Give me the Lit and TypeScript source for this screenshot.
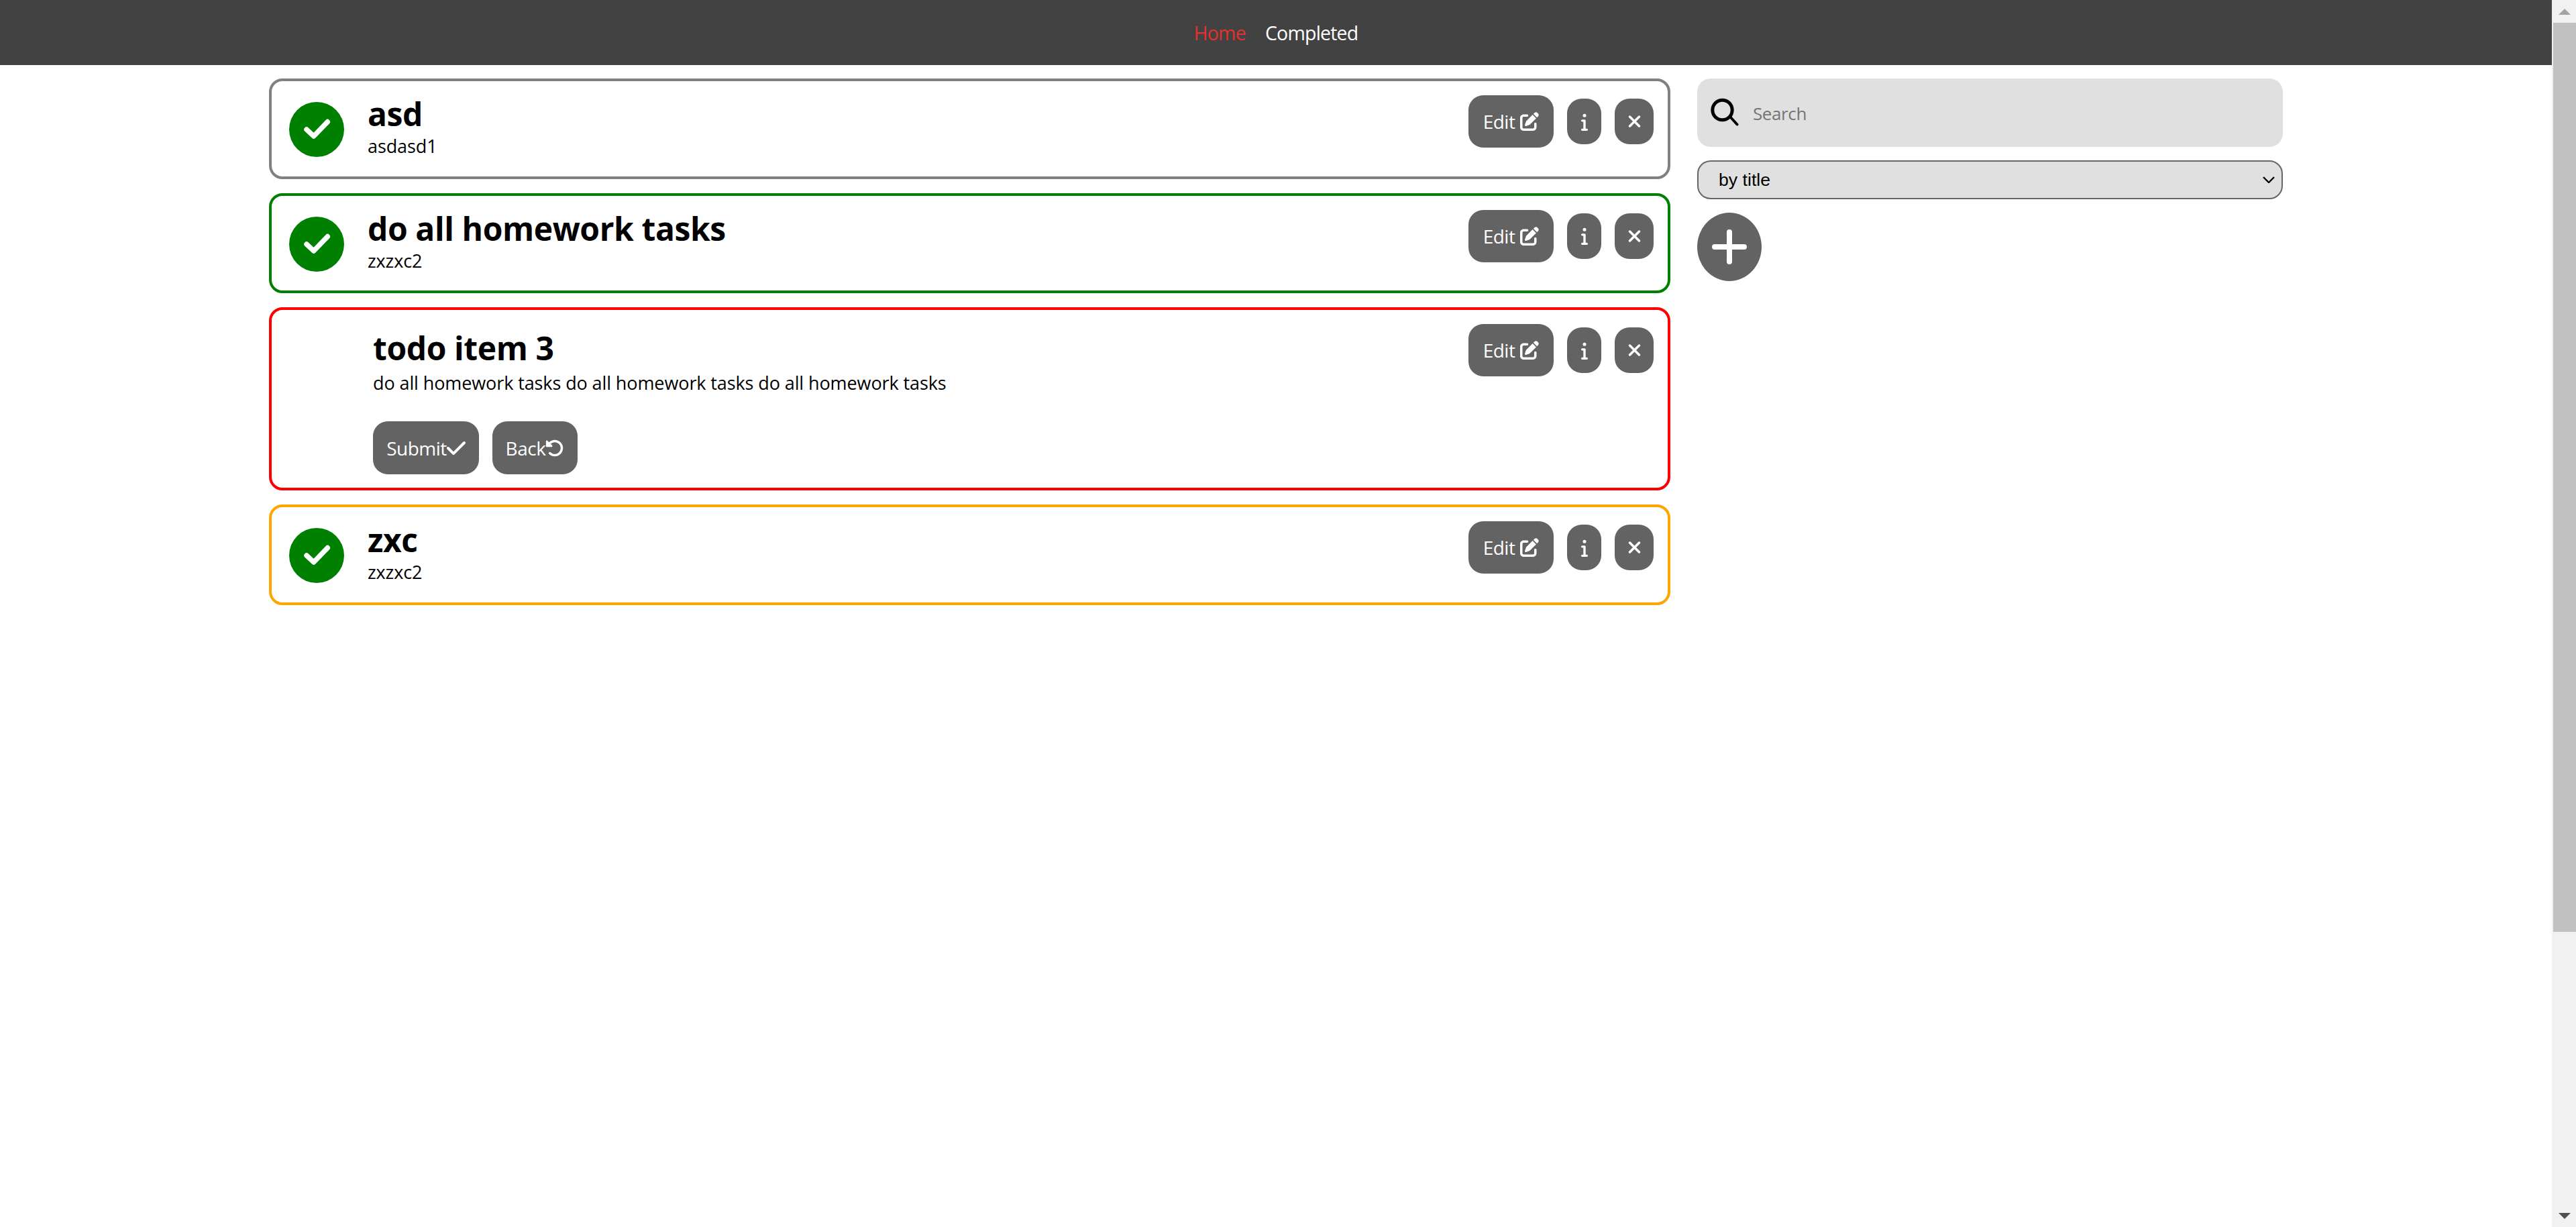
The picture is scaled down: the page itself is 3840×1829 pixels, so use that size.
import { LitElement, html, css, svg } from "lit";
import { customElement, state } from "lit/decorators.js";

const ICONS = {
  check: { box: "0 0 448 512", d: "M438.6 105.4c12.5 12.5 12.5 32.8 0 45.3l-256 256c-12.5 12.5-32.8 12.5-45.3 0l-128-128c-12.5-12.5-12.5-32.8 0-45.3s32.8-12.5 45.3 0L160 338.7 393.4 105.4c12.5-12.5 32.8-12.5 45.3 0z" },
  edit: { box: "0 0 512 512", d: "M471.6 21.7c-21.9-21.9-57.3-21.9-79.2 0L362.3 51.7l97.9 97.9 30.1-30.1c21.9-21.9 21.9-57.3 0-79.2L471.6 21.7zm-299.2 220c-6.1 6.1-10.8 13.6-13.5 21.9l-29.6 88.8c-2.9 8.6-.6 18.1 5.8 24.6s15.9 8.7 24.6 5.8l88.8-29.6c8.2-2.7 15.7-7.4 21.9-13.5L437.7 172.3 339.7 74.3 172.4 241.7zM96 64C43 64 0 107 0 160V416c0 53 43 96 96 96H352c53 0 96-43 96-96V320c0-17.7-14.3-32-32-32s-32 14.3-32 32v96c0 17.7-14.3 32-32 32H96c-17.7 0-32-14.3-32-32V160c0-17.7 14.3-32 32-32h96c17.7 0 32-14.3 32-32s-14.3-32-32-32H96z" },
  info: { box: "0 0 192 512", d: "M48 80a48 48 0 1 1 96 0A48 48 0 1 1 48 80zM0 224c0-17.7 14.3-32 32-32H96c17.7 0 32 14.3 32 32V448h32c17.7 0 32 14.3 32 32s-14.3 32-32 32H32c-17.7 0-32-14.3-32-32s14.3-32 32-32H64V256H32c-17.7 0-32-14.3-32-32z" },
  close: { box: "0 0 384 512", d: "M342.6 150.6c12.5-12.5 12.5-32.8 0-45.3s-32.8-12.5-45.3 0L192 210.7 86.6 105.4c-12.5-12.5-32.8-12.5-45.3 0s-12.5 32.8 0 45.3L146.7 256 41.4 361.4c-12.5 12.5-12.5 32.8 0 45.3s32.8 12.5 45.3 0L192 301.3 297.4 406.6c12.5 12.5 32.8 12.5 45.3 0s12.5-32.8 0-45.3L237.3 256 342.6 150.6z" },
  back: { box: "0 0 512 512", d: "M48.5 224H40c-13.3 0-24-10.7-24-24V72c0-9.7 5.8-18.5 14.8-22.2s19.3-1.7 26.2 5.2L98.6 96.6c87.6-86.5 228.7-86.2 315.8 1c87.5 87.5 87.5 229.3 0 316.8s-229.3 87.5-316.8 0c-12.5-12.5-12.5-32.8 0-45.3s32.8-12.5 45.3 0c62.5 62.5 163.8 62.5 226.3 0s62.5-163.8 0-226.3c-62.2-62.2-162.7-62.5-225.3-1L185 183c6.9 6.9 8.9 17.2 5.2 26.2s-12.5 14.8-22.2 14.8H48.5z" },
};

const icon = (name: keyof typeof ICONS, cls: string) =>
  html`<svg class=${cls} viewBox=${ICONS[name].box} fill="currentColor">${svg`<path d=${ICONS[name].d}></path>`}</svg>`;

type Todo = { title: string; text: string; color: string; open?: boolean };

@customElement("app-root")
export class AppRoot extends LitElement {
  static styles = css`
    :host {
      display: flex;
      height: 100vh;
      overflow: hidden;
      font-family: "Open Sans", "Noto Sans", sans-serif;
      background: #fff;
      color: #000;
    }
    .page {
      flex: 1;
      min-width: 0;
    }
    .nav {
      height: 97px;
      background: #424242;
      display: flex;
      justify-content: center;
      align-items: center;
      gap: 29px;
      font-size: 28.5px;
      letter-spacing: -0.8px;
    }
    .nav a {
      color: #fff;
    }
    .nav a.active {
      color: #e53030;
    }
    .content {
      width: 3002px;
      margin: 20px auto 0;
      display: flex;
      gap: 40px;
      align-items: flex-start;
    }
    .list {
      width: 2089px;
      display: flex;
      flex-direction: column;
      gap: 21px;
    }
    .card {
      box-sizing: border-box;
      min-height: 149.6px;
      border: 4px solid;
      border-radius: 20px;
      display: flex;
      align-items: flex-start;
      padding: 21px 21px 20px 26px;
    }
    .card.open {
      padding-left: 151px;
    }
    .done {
      flex: none;
      width: 82px;
      height: 82px;
      margin: 10px 35px 0 0;
      border-radius: 50%;
      background: #008000;
    }
    .done svg {
      display: block;
      width: 82px;
      height: 82px;
    }
    .body {
      flex: 1;
      min-width: 0;
      margin-top: -3px;
    }
    .title {
      margin: 0;
      font-size: 48px;
      line-height: 61px;
      font-weight: 700;
      letter-spacing: -0.4px;
    }
    .open .title {
      margin-top: 8px;
    }
    .text {
      margin: 0;
      font-size: 27px;
      line-height: 36px;
      letter-spacing: -0.1px;
    }
    .open .text {
      margin-top: 4px;
    }
    .actions {
      display: flex;
      align-items: center;
      gap: 20px;
    }
    .btn {
      box-sizing: border-box;
      border: none;
      padding: 0;
      background: #636363;
      color: #fff;
      font: inherit;
      font-size: 28px;
      letter-spacing: -0.5px;
      display: inline-flex;
      align-items: center;
      justify-content: center;
      border-radius: 22px;
    }
    .btn.edit {
      width: 127px;
      height: 78px;
      gap: 8px;
    }
    .btn.info {
      width: 51px;
      height: 68px;
    }
    .btn.close {
      width: 58px;
      height: 68px;
    }
    .btn.submit {
      width: 158px;
      height: 79px;
    }
    .btn.back {
      width: 127px;
      height: 79px;
    }
    .ic-edit {
      width: 28px;
      height: 28px;
    }
    .ic-info {
      width: 14px;
      height: 27px;
    }
    .ic-close {
      width: 21px;
      height: 28px;
    }
    .ic-check {
      width: 28px;
      height: 32px;
    }
    .ic-back {
      width: 28px;
      height: 28px;
    }
    .forms {
      display: flex;
      gap: 20px;
      margin-top: 39px;
    }
    .side {
      flex: 1;
      min-width: 0;
      display: flex;
      flex-direction: column;
      align-items: flex-start;
      gap: 20px;
    }
    .search {
      box-sizing: border-box;
      width: 100%;
      height: 102px;
      background: #e0e0e0;
      border-radius: 20px;
      display: flex;
      align-items: center;
      gap: 21px;
      padding-left: 18px;
    }
    .search svg {
      flex: none;
      width: 44px;
      height: 44px;
    }
    .search input {
      flex: 1;
      min-width: 0;
      border: none;
      outline: none;
      background: none;
      font: inherit;
      font-size: 26px;
      letter-spacing: -0.4px;
      padding: 2px 0 0;
    }
    .search input::placeholder {
      color: #757575;
    }
    select {
      box-sizing: border-box;
      width: 100%;
      height: 58px;
      padding: 0 30px;
      border: 2px solid #666;
      border-radius: 20px;
      appearance: none;
      background: #e0e0e0 url("data:image/svg+xml,%3Csvg xmlns='http://www.w3.org/2000/svg' viewBox='0 0 18 10'%3E%3Cpath d='M1 1l8 8 8-8' fill='none' stroke='%23000' stroke-width='2.4'/%3E%3C/svg%3E") no-repeat right 10px center / 18px 10px;
      font-family: "Liberation Sans", Arial, sans-serif;
      font-size: 26.67px;
      color: #000;
    }
    .add {
      width: 96px;
      height: 102px;
      border: none;
      padding: 0;
      border-radius: 50%;
      background: #636363;
      color: #fff;
      display: flex;
      align-items: center;
      justify-content: center;
    }
    .add svg {
      width: 52px;
      height: 52px;
    }
    .scrollbar {
      flex: none;
      width: 36px;
      background: #f1f1f1;
      display: flex;
      flex-direction: column;
    }
    .arrow {
      flex: none;
      height: 34px;
      display: flex;
      align-items: center;
      justify-content: center;
      padding-left: 2px;
    }
    .arrow i {
      width: 0;
      height: 0;
      border-left: 9px solid transparent;
      border-right: 9px solid transparent;
    }
    .arrow.up i {
      border-bottom: 9px solid #a3a3a3;
    }
    .arrow.down i {
      border-top: 9px solid #505050;
    }
    .thumb {
      flex: none;
      height: 1355px;
      margin-left: 2px;
      background: #c1c1c1;
    }
    .rest {
      flex: 1;
    }
  `;

  @state() todos: Todo[] = [
    { title: "asd", text: "asdasd1", color: "#808080" },
    { title: "do all homework tasks", text: "zxzxc2", color: "#008000" },
    { title: "todo item 3", text: "do all homework tasks do all homework tasks do all homework tasks", color: "#ff0000", open: true },
    { title: "zxc", text: "zxzxc2", color: "#ffa500" },
  ];

  renderCard(t: Todo) {
    return html`
      <div class="card ${t.open ? "open" : ""}" style="border-color: ${t.color}">
        ${t.open
          ? ""
          : html`<div class="done">
              <svg viewBox="0 0 82 82" fill="none" stroke="#fff" stroke-width="7.5" stroke-linecap="round" stroke-linejoin="round">
                <path d="M26 41l10.7 10L57.3 29.6"></path>
              </svg>
            </div>`}
        <div class="body">
          <h2 class="title">${t.title}</h2>
          <p class="text">${t.text}</p>
          ${t.open
            ? html`<div class="forms">
                <button class="btn submit">Submit${icon("check", "ic-check")}</button>
                <button class="btn back">Back${icon("back", "ic-back")}</button>
              </div>`
            : ""}
        </div>
        <div class="actions">
          <button class="btn edit">Edit${icon("edit", "ic-edit")}</button>
          <button class="btn info">${icon("info", "ic-info")}</button>
          <button class="btn close">${icon("close", "ic-close")}</button>
        </div>
      </div>
    `;
  }

  render() {
    return html`
      <div class="page">
        <nav class="nav">
          <a class="active">Home</a>
          <a>Completed</a>
        </nav>
        <div class="content">
          <div class="list">${this.todos.map((t) => this.renderCard(t))}</div>
          <div class="side">
            <div class="search">
              <svg viewBox="0 0 44 44" fill="none" stroke="#000" stroke-linecap="round">
                <circle cx="19.5" cy="18" r="14.7" stroke-width="5"></circle>
                <path d="M31 28l10.5 11.5" stroke-width="4"></path>
              </svg>
              <input placeholder="Search" />
            </div>
            <select>
              <option>by title</option>
              <option>by date</option>
            </select>
            <button class="add">
              <svg viewBox="0 0 52 52" fill="none" stroke="currentColor" stroke-width="8" stroke-linecap="round">
                <path d="M26 4v44M4 26h44"></path>
              </svg>
            </button>
          </div>
        </div>
      </div>
      <div class="scrollbar">
        <div class="arrow up"><i></i></div>
        <div class="thumb"></div>
        <div class="rest"></div>
        <div class="arrow down"><i></i></div>
      </div>
    `;
  }
}
